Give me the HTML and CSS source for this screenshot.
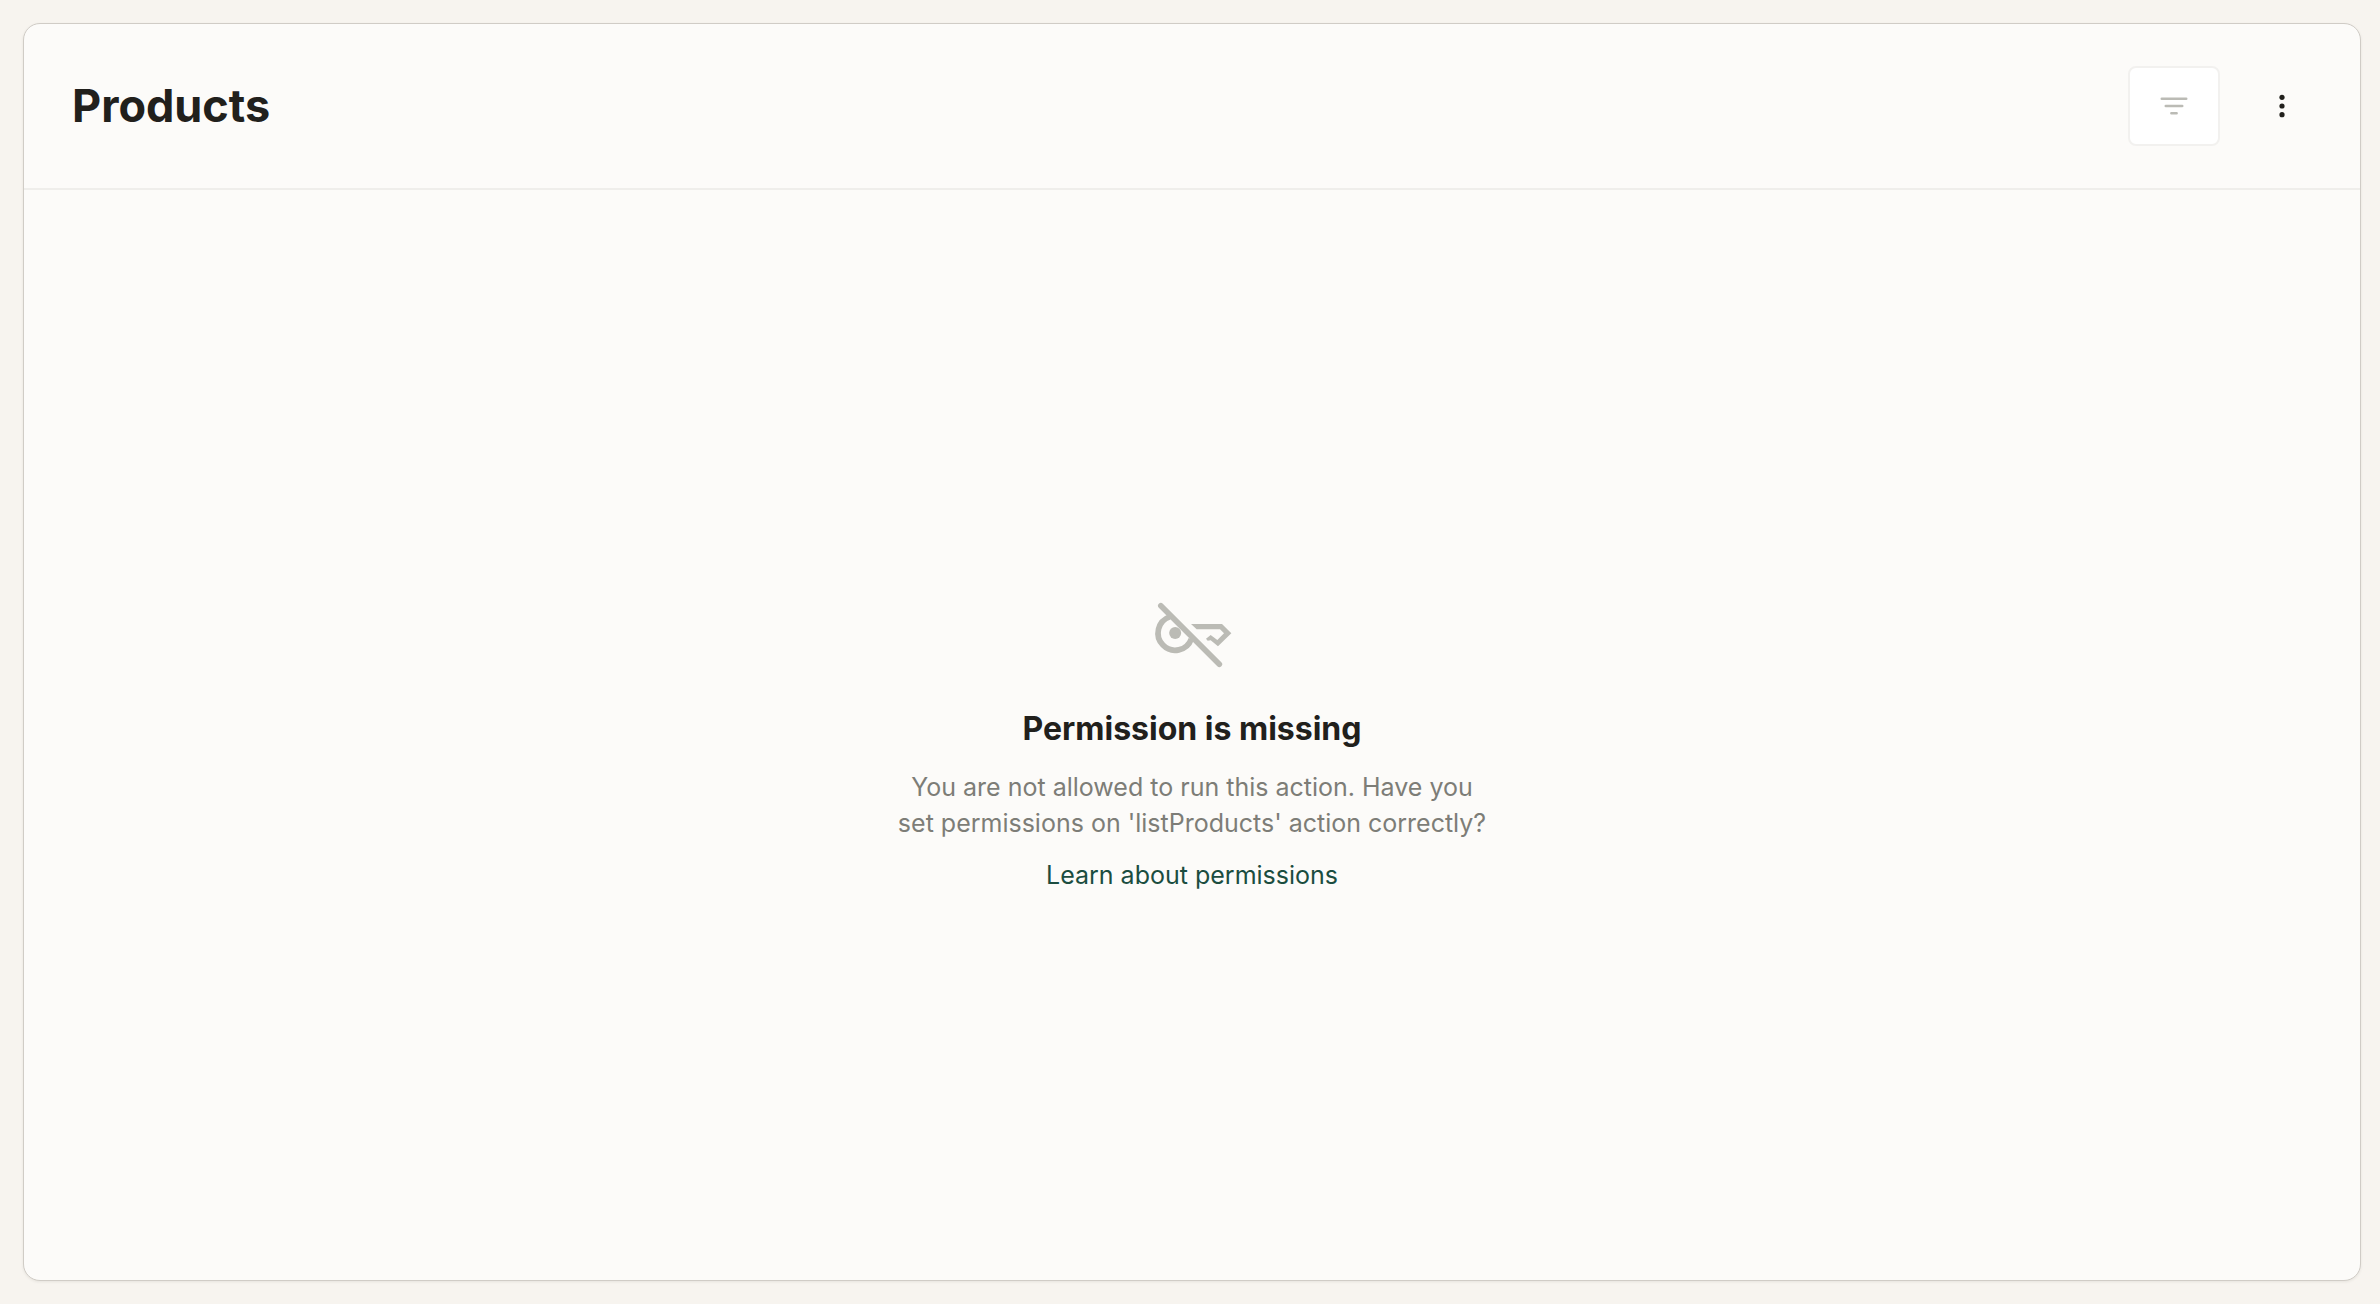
FILE: index.html
```html
<!DOCTYPE html>
<html lang="en">
<head>
<meta charset="utf-8">
<meta name="viewport" content="width=device-width, initial-scale=1">
<title>Products</title>
<link rel="stylesheet" href="styles.css">
</head>
<body>
<main class="card">
  <header class="card-header">
    <h1 class="title">Products</h1>
    <div class="actions">
      <button class="filter-button" type="button" aria-label="Filter" disabled>
        <svg width="32" height="32" viewBox="0 0 32 32" fill="none" stroke="currentColor" stroke-width="2.6" stroke-linecap="round"><path d="M3.8 8.7h24.4M7.8 16h16.4M13.4 23.3h5.2"/></svg>
      </button>
      <button class="menu-button" type="button" aria-label="More options">
        <svg width="32" height="32" viewBox="0 0 32 32" fill="currentColor"><circle cx="16" cy="7.3" r="2.6"/><circle cx="16" cy="16" r="2.6"/><circle cx="16" cy="24.7" r="2.6"/></svg>
      </button>
    </div>
  </header>
  <section class="empty">
    <svg class="empty-icon" width="80" height="70" viewBox="96 60 240 210" fill="none" stroke="currentColor" stroke-width="17" aria-hidden="true">
      <path d="M149 110.500A51.500 51.500 0 1 0 214 177"/>
      <circle cx="165.500" cy="159" r="18" fill="currentColor" stroke="none"/>
      <path d="M122.500 77L298 253" stroke-linecap="round"/>
      <path d="M213 132H306L334 160L294 199L272 181L263 182L258 176L272 165L292 180L312 160L300 148H230Z" fill="currentColor" stroke="none"/>
    </svg>
    <h2 class="empty-title">Permission is missing</h2>
    <p class="empty-text">You are not allowed to run this action. Have you<br>set permissions on 'listProducts' action correctly?</p>
    <a class="empty-link" href="#">Learn about permissions</a>
  </section>
</main>
</body>
</html>
```
FILE: styles.css
```css
* {
  box-sizing: border-box;
}

body {
  margin: 0;
  min-height: 100vh;
  padding: 23px 19px 23px 23px;
  display: flex;
  background: #f7f4ef;
  color: #21201c;
  font-family: Inter, "Liberation Sans", sans-serif;
}

.card {
  flex: 1;
  display: flex;
  flex-direction: column;
  background: #fcfbf9;
  border: 1px solid #d0ccc6;
  border-radius: 17px;
  box-shadow: 0 1px 3px rgba(33, 32, 28, 0.08);
}

.card-header {
  display: flex;
  align-items: center;
  justify-content: space-between;
  padding: 42px 48px;
  border-bottom: 2px solid #efeeeb;
}

.title {
  margin: 0;
  font-size: 45px;
  line-height: 56px;
  font-weight: 700;
}

.actions {
  display: flex;
  gap: 32px;
}

button {
  display: flex;
  align-items: center;
  justify-content: center;
  height: 80px;
  padding: 0;
  border: 0;
  border-radius: 8px;
  background: none;
}

.filter-button {
  width: 92px;
  border: 2px solid #f2f1ef;
  background: #fff;
  color: #bbbbb5;
}

.menu-button {
  width: 60px;
  color: #21201c;
}

.empty {
  flex: 1;
  display: flex;
  flex-direction: column;
  align-items: center;
  justify-content: center;
  padding-top: 23px;
  text-align: center;
}

.empty-icon {
  color: #bbbbb5;
}

.empty-title {
  margin: 39px 0 20px;
  font-size: 32px;
  line-height: 40px;
  font-weight: 700;
}

.empty-text {
  margin: 0 0 16px;
  font-size: 25px;
  line-height: 36px;
  color: #7d7d77;
}

.empty-link {
  font-size: 25px;
  line-height: 36px;
  color: #1b4d40;
  text-decoration: none;
}
```
